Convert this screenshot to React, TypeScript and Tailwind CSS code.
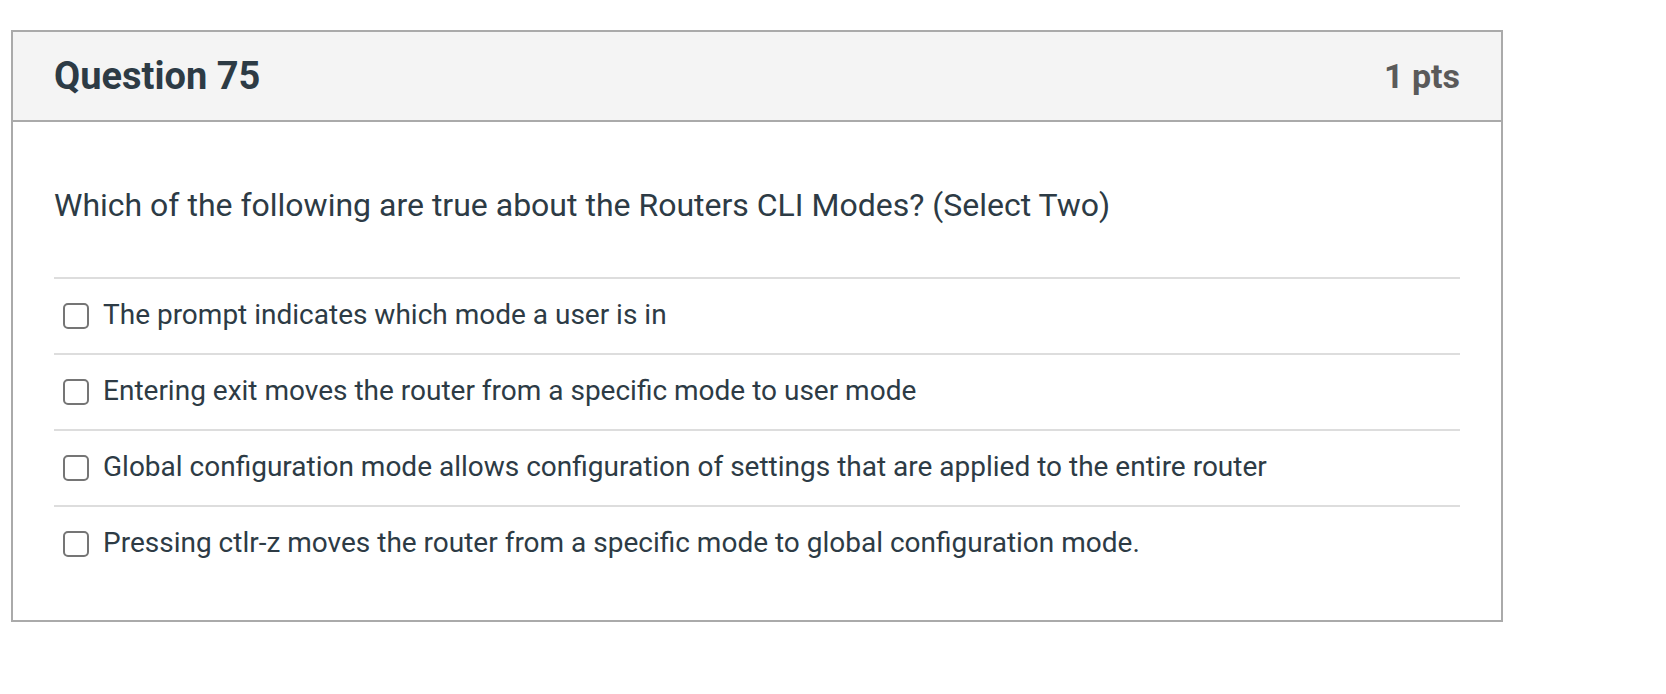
export default function App() {
  const options = [
    "The prompt indicates which mode a user is in",
    "Entering exit moves the router from a specific mode to user mode",
    "Global configuration mode allows configuration of settings that are applied to the entire router",
    "Pressing ctlr-z moves the router from a specific mode to global configuration mode.",
  ];

  return (
    <div className="min-h-[694px] bg-white pt-[30px] pl-[11px] font-['Roboto',sans-serif] text-[#2d3b45]">
      <div className="w-[1492px] border-2 border-[#aaaaaa]">
        <div className="flex h-[90px] items-center justify-between border-b-2 border-[#aaaaaa] bg-[#f4f4f4] px-[41px]">
          <h2 className="text-[38px] font-bold leading-none">Question 75</h2>
          <span className="text-[34px] font-bold leading-none text-[#5a5a5a]">1 pts</span>
        </div>
        <div className="px-[41px] pb-[39px]">
          <p className="pt-[64px] pb-[53px] text-[32px] leading-[38px]">
            Which of the following are true about the Routers CLI Modes? (Select Two)
          </p>
          <div>
            {options.map((opt, i) => (
              <div
                key={i}
                className="flex h-[76px] items-center gap-[14px] border-t-2 border-[#dddddd] pl-[9px]"
              >
                <span className="h-[26px] w-[26px] shrink-0 rounded-[5px] border-2 border-[#757575] bg-white" />
                <span className="pb-[2px] text-[28px] leading-[34px]">{opt}</span>
              </div>
            ))}
          </div>
        </div>
      </div>
    </div>
  );
}
